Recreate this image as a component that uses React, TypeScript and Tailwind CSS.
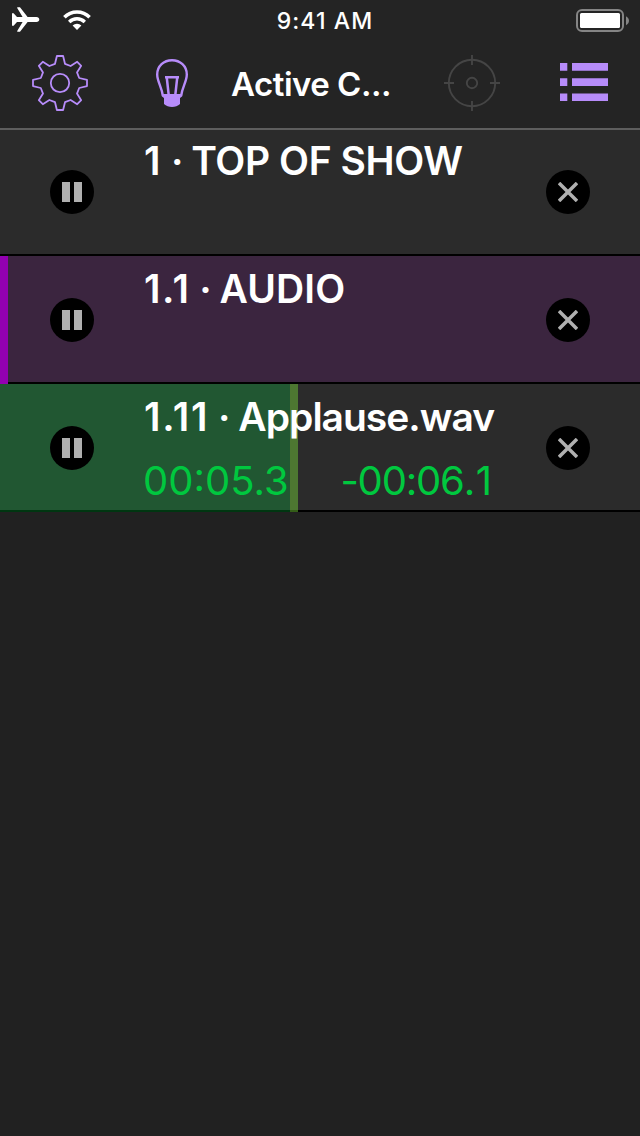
import clsx from "clsx";

type Cue = {
  id: string;
  number: string;
  name: string;
  rowClass: string;
  numberClass: string;
  nameClass: string;
  stripe?: boolean;
  elapsed?: string;
  remaining?: string;
  progress?: number;
};

const cues: Cue[] = [
  {
    id: "top",
    number: "1",
    name: "TOP OF SHOW",
    rowClass: "bg-[#2b2b2b]",
    numberClass: "tracking-[1.6px]",
    nameClass: "tracking-[-0.4px]",
  },
  {
    id: "audio",
    number: "1.1",
    name: "AUDIO",
    rowClass: "bg-[#3b253f]",
    numberClass: "tracking-[1.5px]",
    nameClass: "tracking-[0.1px]",
    stripe: true,
  },
  {
    id: "applause",
    number: "1.11",
    name: "Applause.wav",
    rowClass: "bg-[#2b2b2b]",
    numberClass: "tracking-[1.7px]",
    nameClass: "tracking-[-1px]",
    elapsed: "00:05.3",
    remaining: "-00:06.1",
    progress: 298,
  },
];

function AirplaneIcon() {
  return (
    <svg className="h-[26px] w-7" viewBox="0 0 28 26" fill="white">
      <path d="M0 6.200h1.600l3.400 3.800h5.600L5.200.9C5 .5 5.300.2 5.700.2h1.700c.4 0 .7.100 1 .5l7.200 9.300h8.900c1.600 0 2.800.9 2.800 2.500s-1.200 2.500-2.800 2.500h-8.900l-7.200 9.300c-.3.4-.6.500-1 .5H5.700c-.4 0-.7-.3-.5-.7L10.600 15H5l-3.400 3.800H0z" />
    </svg>
  );
}

function WifiIcon() {
  return (
    <svg className="h-5 w-7" viewBox="0 0 28 20" fill="none" stroke="white">
      <path d="M1.400 7.300A17.700 17.700 0 0 1 26.600 7.300" strokeWidth="3.600" />
      <path d="M6.200 12A11.100 11.100 0 0 1 21.800 12" strokeWidth="3.400" />
      <path d="M9.600 15.500A6.200 6.200 0 0 1 18.400 15.500L14 20z" fill="white" stroke="none" />
    </svg>
  );
}

function BatteryIcon() {
  return (
    <svg className="h-6 w-[54px]" viewBox="0 0 54 24" fill="none">
      <rect x="1" y="1" width="46" height="21" rx="5" stroke="#858585" strokeWidth="2" />
      <rect x="4" y="4" width="40" height="15" rx="1.500" fill="white" />
      <path d="M50 7.200c4 2 4 7 0 9z" fill="#858585" />
    </svg>
  );
}

function GearIcon() {
  return (
    <svg
      className="size-14"
      viewBox="0 0 56 56"
      fill="none"
      stroke="#b78cfa"
      strokeWidth="1.800"
      strokeLinejoin="round"
    >
      <path d="M24.900 1h6.200l1.900 7.800 5.600 2.200 6.600-4.200 4 4-4.200 6.600 2.200 5.600 7.800 1.900v6.200l-7.800 1.900-2.200 5.600 4.200 6.600-4 4-6.600-4.200-5.600 2.200-1.900 7.800h-6.200l-1.900-7.800-5.600-2.200-6.600 4.200-4-4 4.200-6.600-2.200-5.600L1 31.100v-6.200L8.800 23l2.200-5.600-4.200-6.600 4-4 6.600 4.200L23 8.800z" />
      <circle cx="28" cy="28" r="9.200" />
    </svg>
  );
}

function BulbIcon() {
  return (
    <svg className="h-12 w-8" viewBox="0 0 32 48" fill="none" stroke="#b78cfa">
      <path
        d="M6.900 37C5.800 28 1.200 22.500 1.200 15.500C1.200 7 7.800 1.200 16 1.200S30.800 7 30.800 15.500C30.800 22.500 26.200 28 25.100 37"
        strokeWidth="2.400"
      />
      <path d="M9 18.200h14M10.700 18l2 18M21.300 18l-2 18" strokeWidth="2.500" />
      <path
        d="M6 35h20v2.500l-2 1.500v6c-2 2-5 3-8 3s-6-1-8-3v-6l-2-1.500z"
        fill="#b78cfa"
        stroke="none"
      />
    </svg>
  );
}

function TargetIcon() {
  return (
    <svg className="size-14" viewBox="0 0 56 56" fill="none" stroke="#454545" strokeWidth="1.900">
      <circle cx="28" cy="28" r="23.200" />
      <circle cx="28" cy="28" r="5.200" />
      <path d="M28 0v10M28 46v10M0 28h10M46 28h10" />
    </svg>
  );
}

function ListIcon() {
  return (
    <svg className="h-10 w-12" viewBox="0 0 48 40" fill="#b78cfa">
      <path d="M0 0h7.300v7.700H0zM12 0h36v7.700H12zM0 15.200h7.300v7.700H0zM12 15.200h36v7.700H12zM0 30.400h7.300v7.700H0zM12 30.400h36v7.700H12z" />
    </svg>
  );
}

function PauseButton() {
  return (
    <button className="flex size-11 items-center justify-center gap-1 rounded-full bg-black">
      <span className="h-5 w-2 bg-[#b0b0b0]" />
      <span className="h-5 w-2 bg-[#b0b0b0]" />
    </button>
  );
}

function StopButton() {
  return (
    <button className="flex size-11 items-center justify-center rounded-full bg-black">
      <svg className="size-5" viewBox="0 0 20 20" stroke="#b0b0b0" strokeWidth="3.500">
        <path d="M1 1l18 18M19 1L1 19" />
      </svg>
    </button>
  );
}

function CueRow({ cue }: { cue: Cue }) {
  return (
    <li className={clsx("relative h-32 border-b-2 border-black px-[50px] pt-0.5", cue.rowClass)}>
      {cue.stripe && <div className="absolute top-0 -bottom-0.5 left-0 w-2 bg-[#9300b1]" />}
      {cue.progress && (
        <div className="absolute top-0 -bottom-0.5 left-0 flex" style={{ width: cue.progress }}>
          <div className="flex-1 bg-[rgba(0,234,73,0.23)]" />
          <div className="w-2 bg-[rgba(130,235,60,0.4)]" />
        </div>
      )}
      <div className="relative flex w-full items-center">
        <PauseButton />
        <div className="ml-[50px] flex h-[124px] w-[402px] flex-col">
          <h2 className="mt-1.5 h-12 text-[39px] leading-[49px] font-semibold whitespace-pre text-white">
            <span className={cue.numberClass}>{cue.number}</span>
            <span className="tracking-[-1px]"> · </span>
            <span className={cue.nameClass}>{cue.name}</span>
          </h2>
          {cue.elapsed && cue.remaining && (
            <div className="mt-4 flex w-[352px] justify-between text-[40px] leading-[49px] whitespace-nowrap text-[#00c83f]">
              <span className="-ml-px">{cue.elapsed}</span>
              <span>
                <span className="tracking-[-1.2px]">{cue.remaining.slice(0, -2)}</span>
                <span className="tracking-[4px]">{cue.remaining.slice(-2)}</span>
              </span>
            </div>
          )}
        </div>
        <StopButton />
      </div>
    </li>
  );
}

export default function App() {
  return (
    <div className="h-[1136px] w-[640px] overflow-hidden bg-[#212121] font-['Inter','Liberation_Sans',sans-serif]">
      <header className="relative z-10 -mb-0.5 h-[130px] border-b-2 border-[#5e5e5e] bg-[#242424]">
        <div className="flex h-10 items-center justify-between pr-[10px] pl-3">
          <div className="flex w-[200px] items-center gap-[23px]">
            <AirplaneIcon />
            <WifiIcon />
          </div>
          <span className="pt-0.5 pl-2 text-[23px] font-medium tracking-[1.1px] whitespace-nowrap text-white">
            9:41 AM
          </span>
          <div className="flex w-[200px] justify-end pt-px">
            <BatteryIcon />
          </div>
        </div>
        <nav className="flex h-[86px] items-center pl-8">
          <GearIcon />
          <div className="ml-[68px]">
            <BulbIcon />
          </div>
          <h1 className="ml-[43px] w-[169px] pt-[3px] text-[33px] font-semibold tracking-[-0.5px] whitespace-nowrap text-white">
            Active C...
          </h1>
          <div className="ml-11">
            <TargetIcon />
          </div>
          <div className="ml-[60px]">
            <ListIcon />
          </div>
        </nav>
      </header>
      <ul>
        {cues.map((cue) => (
          <CueRow key={cue.id} cue={cue} />
        ))}
      </ul>
    </div>
  );
}
